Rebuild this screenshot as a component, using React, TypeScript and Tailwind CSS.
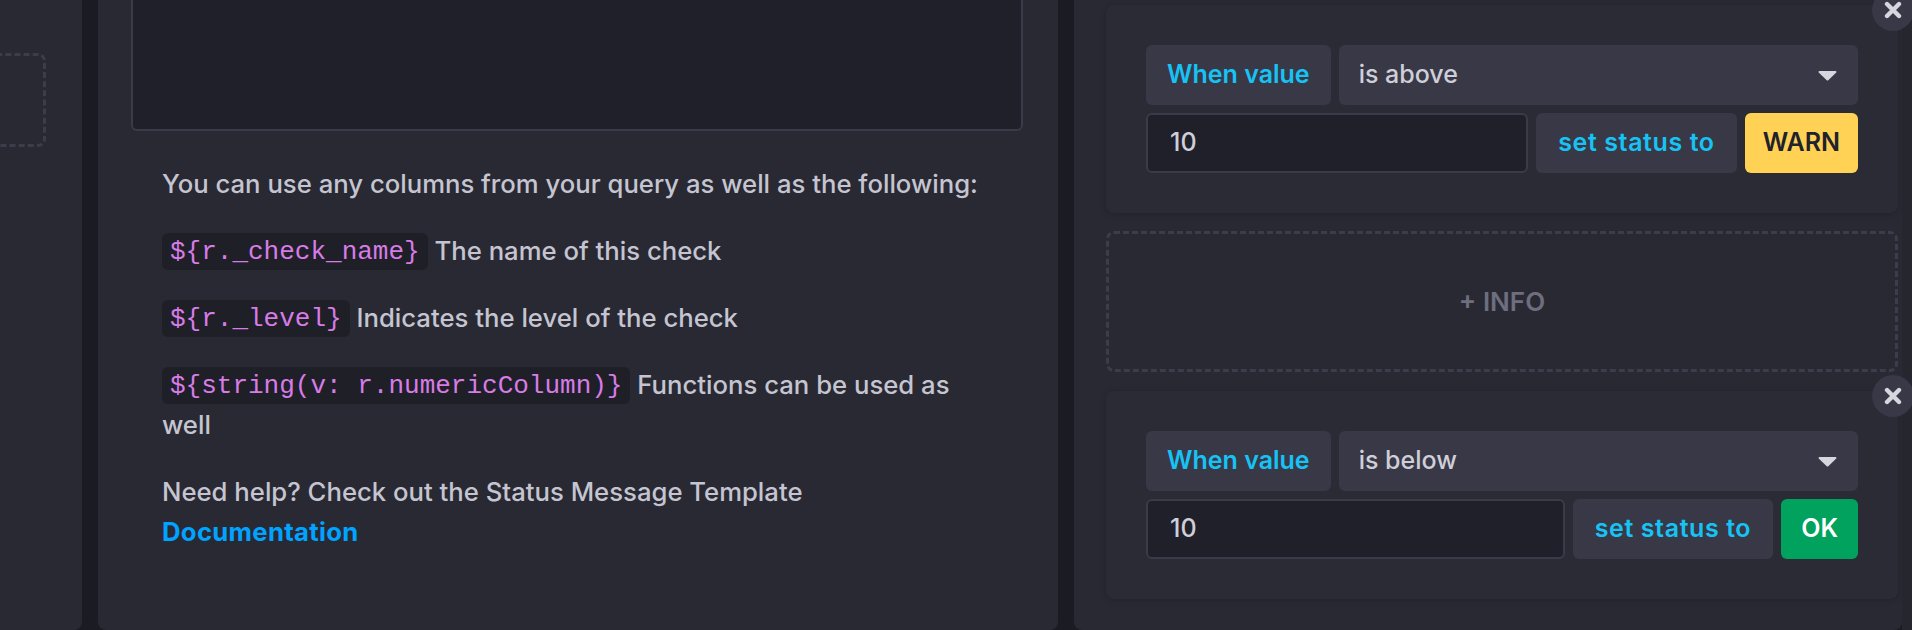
import React from 'react';

type Rule = {
  op: string;
  value: string;
  level: string;
  levelClass: string;
};

const RULES: Rule[] = [
  { op: 'is above', value: '10', level: 'WARN', levelClass: 'bg-[#ffd255] text-[#22222c] px-[18px]' },
  { op: 'is below', value: '10', level: 'OK', levelClass: 'bg-[#00a25e] text-white px-[20px]' },
];

const sans = "font-['Inter','Noto_Sans',sans-serif]";
const mono = "font-['Liberation_Mono','DejaVu_Sans_Mono',monospace]";

const CloseIcon = () => (
  <svg width="18" height="18" viewBox="0 0 18 18" fill="none">
    <path d="M3 3L15 15M15 3L3 15" stroke="#d6d6de" strokeWidth="4.4" strokeLinecap="round" />
  </svg>
);

const Caret = () => (
  <svg width="19" height="11" viewBox="0 0 19 11">
    <path d="M1.5 1h16a1 1 0 0 1 .8 1.6l-8 7.6a1.2 1.2 0 0 1-1.6 0l-8-7.6A1 1 0 0 1 1.5 1z" fill="#d6d6de" />
  </svg>
);

// inline (not inline-block) so the pill never stretches the 40px line box
const Code = ({ children }: { children: React.ReactNode }) => (
  <code
    className={`${mono} rounded-md bg-[#1f1f28] px-[8px] py-[3.5px] align-[2px] text-[26px] leading-[30px] text-[#d77ce6]`}
  >
    {children}
  </code>
);

const RuleCard = ({ rule }: { rule: Rule }) => (
  <div className="relative w-[792px] rounded-lg bg-[#2b2b36] p-[40px] shadow-[0_1px_6px_rgba(0,0,0,0.18)]">
    <button className="absolute -right-[16px] -top-[16px] flex h-[42px] w-[42px] items-center justify-center rounded-full bg-[#383846]">
      <CloseIcon />
    </button>
    <div className="flex gap-2">
      <div className="flex h-[60px] items-center rounded-md bg-[#383846] px-[21px] text-[25px] font-semibold text-[#16c3f4]">
        When value
      </div>
      <div className="flex h-[60px] flex-1 items-center justify-between rounded-md bg-[#383846] pl-[20px] pr-[21px] text-[25px] font-medium text-[#cfcfd9]">
        <span>{rule.op}</span>
        <Caret />
      </div>
    </div>
    <div className="mt-2 flex gap-2">
      <div className="flex h-[60px] flex-1 items-center rounded-md border-2 border-[#3a3a48] bg-[#20202a] pl-[22px] text-[25px] font-medium text-[#cfcfd9]">
        {rule.value}
      </div>
      <div className="flex h-[60px] items-center rounded-md bg-[#383846] px-[22px] text-[25px] font-semibold tracking-[0.6px] text-[#16c3f4]">
        set status to
      </div>
      <div className={`flex h-[60px] items-center rounded-md text-[25px] font-semibold ${rule.levelClass}`}>
        {rule.level}
      </div>
    </div>
  </div>
);

export default function App() {
  return (
    <div className={`${sans} flex h-[630px] w-[1912px] overflow-hidden bg-[#1b1b23]`}>
      {/* left column, mostly scrolled out of view */}
      <div className="h-full w-[82px] shrink-0 overflow-hidden rounded-br-lg bg-[#292933]">
        <div className="-ml-[30px] mt-[53px] h-[94px] w-[76px] rounded-lg border-[3px] border-dashed border-[#3c3c4a]" />
      </div>

      {/* status message panel */}
      <div className="ml-[16px] h-full w-[960px] shrink-0 rounded-b-lg bg-[#292933]">
        <div className="ml-[33px] h-[131px] w-[892px] rounded-b-md border-2 border-t-0 border-[#3a3a48] bg-[#20202a]" />
        <div className="ml-[64px] mt-[33px] w-[830px] text-[25.7px] font-medium leading-[40px] text-[#c5c5d1]">
          <p className="mb-[27px]">You can use any columns from your query as well as the following:</p>
          <p className="mb-[27px]">
            <Code>{'${r._check_name}'}</Code> The name of this check
          </p>
          <p className="mb-[27px]">
            <Code>{'${r._level}'}</Code> Indicates the level of the check
          </p>
          <p className="mb-[27px]">
            <Code>{'${string(v: r.numericColumn)}'}</Code> Functions can be used as well
          </p>
          <p>
            Need help? Check out the Status Message Template{' '}
            <a className="font-bold tracking-[0.3px] text-[#00a3ff]">Documentation</a>
          </p>
        </div>
      </div>

      {/* thresholds panel */}
      <div className="ml-[16px] h-full w-[828px] shrink-0 rounded-b-lg bg-[#292933] pl-[32px] pt-[5px]">
        <RuleCard rule={RULES[0]} />
        <div className="mt-[18px] flex h-[141px] w-[792px] items-center justify-center rounded-lg border-[3px] border-dashed border-[#3c3c4a] text-[26px] font-semibold text-[#6e6e7e]">
          + INFO
        </div>
        <div className="mt-[19px]">
          <RuleCard rule={RULES[1]} />
        </div>
      </div>
      <div className="h-full flex-1 bg-[#26262f]" />
    </div>
  );
}
